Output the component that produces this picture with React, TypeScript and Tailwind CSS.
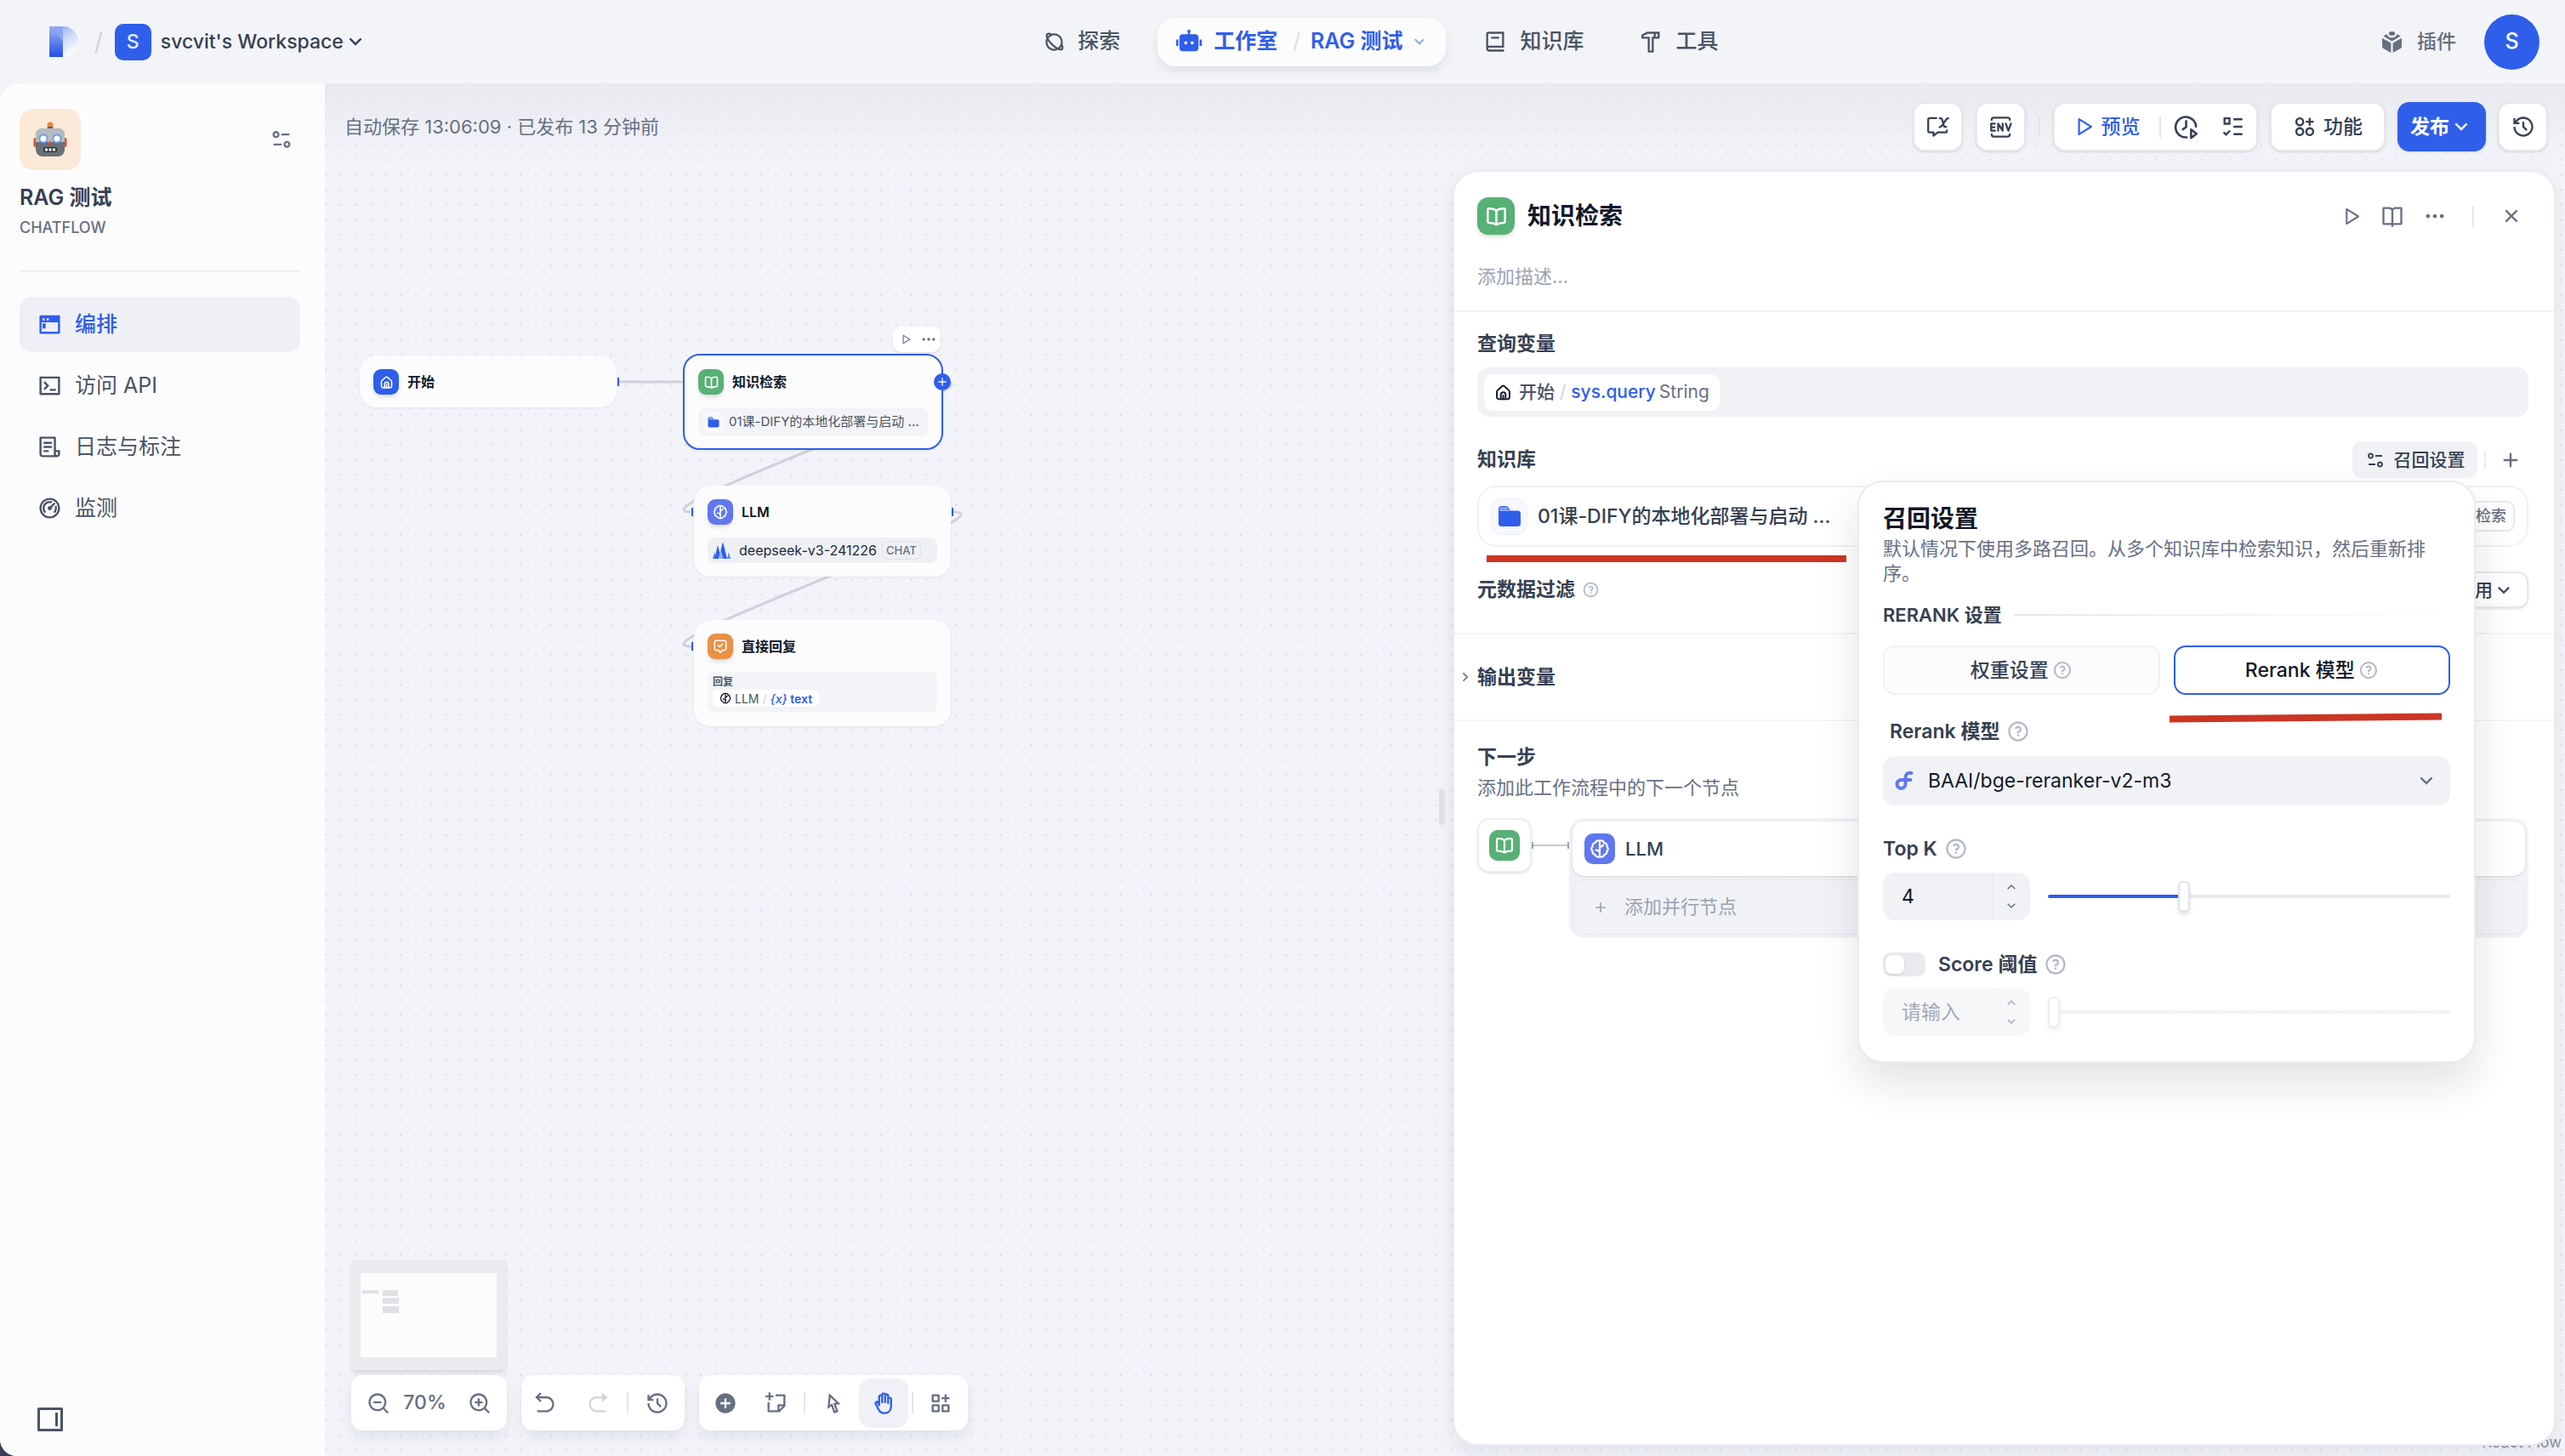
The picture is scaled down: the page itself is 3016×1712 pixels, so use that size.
import React, { useState } from 'react';
import {
  RiAddCircleFill,
  RiAddLine,
  RiApps2AddLine,
  RiArrowDownSLine,
  RiArrowGoBackLine,
  RiArrowGoForwardFill,
  RiArrowRightSLine,
  RiArrowUpSLine,
  RiBook2Line,
  RiBookOpenLine,
  RiCloseLine,
  RiCursorLine,
  RiDashboard2Line,
  RiEqualizer2Line,
  RiFileList3Line,
  RiFunctionAddLine,
  RiHammerLine,
  RiHistoryLine,
  RiMoreFill,
  RiPlanetLine,
  RiPlayLargeLine,
  RiQuestionLine,
  RiRobot2Fill,
  RiStickyNoteAddLine,
  RiTerminalBoxLine,
  RiTerminalWindowFill,
  RiZoomInLine,
  RiZoomOutLine,
} from 'react-icons/ri';

type IconProps = { className?: string };

const HomeIcon = ({ className }: IconProps) => (
  <svg viewBox="0 0 24 24" fill="none" stroke="currentColor" strokeWidth="2.2" strokeLinecap="round" strokeLinejoin="round" className={className}>
    <path d="M3.5 11.2c0-1 .4-1.8 1.2-2.4l5.6-5c1-.8 2.4-.8 3.4 0l5.6 5c.8.6 1.2 1.4 1.2 2.4v6.800a3 3 0 0 1-3 3h-11a3 3 0 0 1-3-3z" />
    <path d="M8.800 21v-6.200c0-1.800 1.400-3 3.200-3s3.200 1.200 3.200 3V21M12 16v5" />
  </svg>
);

const KnowledgeIcon = ({ className }: IconProps) => (
  <svg viewBox="0 0 24 24" fill="none" stroke="currentColor" strokeWidth="2.4" strokeLinecap="round" strokeLinejoin="round" className={className}>
    <path d="M12 5.500C10.200 4 7.500 3.200 4.200 3.200c-1.200 0-2 .8-2 2v12.200c0 1 .7 1.800 1.800 1.900 3.200.1 5.500.6 8 2 2.500-1.400 4.800-1.900 8-2 1.100-.1 1.800-.9 1.800-1.900V5.200c0-1.200-.8-2-2-2-3.300 0-6 .8-7.800 2.300zM12 5.500v15.300" />
  </svg>
);

const BrainIcon = ({ className }: IconProps) => (
  <svg viewBox="0 0 24 24" fill="none" stroke="currentColor" strokeWidth="2.2" strokeLinecap="round" strokeLinejoin="round" className={className}>
    <path d="M12 2.500v19M12 2.500c-2.500-.8-4.800.4-5.300 2.500C4.300 5.600 3.200 7.500 3.600 9.500c-1.800 1.500-1.800 4 0 5.200-.3 2 .9 3.800 3.200 4.400.6 2 2.900 3.200 5.200 2.400M12 2.500c2.500-.8 4.800.4 5.300 2.500 2.400.6 3.500 2.500 3.100 4.500 1.800 1.500 1.800 4 0 5.200.3 2-.9 3.800-3.200 4.400-.6 2-2.900 3.200-5.200 2.400" />
    <path d="M12 9.500c2.200.2 3.600-.7 4-2.300M12 16.500c-.6-2-2-3-4.500-2.800" />
  </svg>
);

const AnswerIcon = ({ className }: IconProps) => (
  <svg viewBox="0 0 24 24" fill="none" stroke="currentColor" strokeWidth="2.2" strokeLinecap="round" strokeLinejoin="round" className={className}>
    <path d="M5.500 3h13A2.500 2.500 0 0 1 21 5.500v10a2.500 2.500 0 0 1-2.500 2.500H15l-3 3.500L9 18H5.500A2.500 2.500 0 0 1 3 15.500v-10A2.500 2.500 0 0 1 5.500 3z" />
    <path d="m8.500 10.500 2.500 2.500 4.800-5" />
  </svg>
);

const FolderIcon = ({ className }: IconProps) => (
  <svg viewBox="0 0 28 26" className={className}>
    <path d="M1 4.500A3.500 3.500 0 0 1 4.500 1h5.300a3.500 3.500 0 0 1 3.100 1.900L14.500 6H1z" fill="#7f9ff3" />
    <path d="M1 6.500h22.500A3.500 3.500 0 0 1 27 10v11.500a3.500 3.500 0 0 1-3.500 3.500h-19A3.500 3.500 0 0 1 1 21.500z" fill="#2f5eeb" />
    <path d="M1.500 9V4.800A3.300 3.300 0 0 1 4.800 1.500h4.700a3 3 0 0 1 2.700 1.700l1.600 3.300" fill="none" stroke="#2f5eeb" />
  </svg>
);

const ConversationVarIcon = ({ className }: IconProps) => (
  <svg viewBox="0 0 24 24" fill="none" stroke="currentColor" strokeWidth="2" strokeLinecap="round" strokeLinejoin="round" className={className}>
    <path d="M10.500 2.500h-7A1.500 1.500 0 0 0 2 4v12a1.500 1.500 0 0 0 1.500 1.500h4V21l4.500-3.500h8a1.500 1.500 0 0 0 1.500-1.500v-.5" />
    <path d="M14 2.800h1.200c.6 0 1 .3 1.200.9l2 7c.2.600.6.900 1.200.9h1.200M23 2.800c-1 0-1.600.4-2.200 1.200L16 10.800c-.6.800-1.200 1.200-2.200 1.200" />
  </svg>
);

const EnvIcon = ({ className }: IconProps) => (
  <svg viewBox="0 0 24 24" fill="none" stroke="currentColor" strokeWidth="2" strokeLinecap="round" strokeLinejoin="round" className={className}>
    <path d="M2.500 4.500C2.500 3 3.300 2.200 4.800 2.200h14.400c1.500 0 2.300.8 2.300 2.300M2.500 19.500c0 1.500.8 2.300 2.300 2.300h14.400c1.500 0 2.300-.8 2.300-2.300" />
    <path d="M6 8.300H2v7.400h4M2 12h3.500M9.300 15.700V8.300l4.700 7.400V8.300M17.300 8.300l2.700 7.400 2.700-7.400" />
  </svg>
);

const RunHistoryIcon = ({ className }: IconProps) => (
  <svg viewBox="0 0 24 24" fill="none" stroke="currentColor" strokeWidth="2" strokeLinecap="round" strokeLinejoin="round" className={className}>
    <path d="M21 11.500A9.300 9.300 0 1 0 12.500 21.300" />
    <path d="M12 6.500V12l-3 2M16.500 14.200v7.600l5-3.800z" />
  </svg>
);

const ChecklistIcon = ({ className }: IconProps) => (
  <svg viewBox="0 0 24 24" fill="none" stroke="currentColor" strokeWidth="2" className={className}>
    <path d="M4 3.500h5v5.500H4zM13 4.500h9M13 12h9M13 19.500h9M3 17.500l2.500 2.500L9.500 16" />
  </svg>
);

const PluginIcon = ({ className }: IconProps) => (
  <svg viewBox="0 0 24 24" fill="currentColor" className={className}>
    <path d="M1.800 7.800 11 12.900V23l-8-4.400a2.300 2.300 0 0 1-1.200-2zM22.200 7.800 13 12.900V23l8-4.400a2.300 2.300 0 0 0 1.200-2z" />
    <path d="M6.800 3.600 3 5.800l9 5.200 9-5.200-3.800-2.200c-.2 2-2.200 3.800-5.200 3.800S7 5.600 6.800 3.600z" />
    <ellipse cx="12" cy="3" rx="3.200" ry="2.200" />
  </svg>
);

const HandIcon = ({ className }: IconProps) => (
  <svg viewBox="0 0 24 24" fill="none" stroke="currentColor" strokeWidth="2" strokeLinecap="round" strokeLinejoin="round" className={className}>
    <path d="M7.500 14V5.500a1.500 1.500 0 0 1 3 0V11 3.500a1.500 1.500 0 0 1 3 0V11 4.500a1.500 1.500 0 0 1 3 0V12 8a1.500 1.500 0 0 1 3 0v6.500c0 4.500-2.500 7.500-6.500 7.500-3.500 0-5-1.500-6.500-4.500l-2.600-5a1.400 1.400 0 0 1 2.400-1.400z" />
  </svg>
);

const SidebarToggleIcon = ({ className }: IconProps) => (
  <svg viewBox="0 0 30 28" fill="none" stroke="currentColor" strokeWidth="3" strokeLinejoin="round" className={className}>
    <path d="M1.500 1.500h27v25h-27zM22.500 6v16" />
  </svg>
);

const DifyLogo = () => (
  <svg viewBox="0 0 36 38" className="h-[38px] w-9">
    <defs>
      <linearGradient id="stem" x1="0" y1="0" x2="0" y2="1">
        <stop offset="0" stopColor="#9db2f2" />
        <stop offset="1" stopColor="#2450e6" />
      </linearGradient>
      <linearGradient id="bowl" x1="0" y1="0" x2="0.6" y2="1">
        <stop offset="0" stopColor="#7d97ee" />
        <stop offset="0.5" stopColor="#c9d4f7" />
        <stop offset="1" stopColor="#ffffff" />
      </linearGradient>
    </defs>
    <path d="M1 1h16a18 18 0 0 1 0 36H1z" fill="url(#bowl)" />
    <path d="M1 1h16v36H1z" fill="url(#stem)" />
    <path d="M1 1h16v17z" fill="#8da5f0" />
  </svg>
);

const RobotFace = () => (
  <svg viewBox="0 0 40 42" className="h-[42px] w-10">
    <circle cx="20" cy="4" r="3.500" fill="#e8833a" />
    <rect x="16.500" y="6" width="7" height="4" rx="1" fill="#59656c" />
    <rect x="0.500" y="19" width="4" height="11" rx="2" fill="#d9532c" />
    <rect x="35.500" y="19" width="4" height="11" rx="2" fill="#d9532c" />
    <rect x="3" y="8" width="34" height="33" rx="8" fill="#667076" />
    <path d="M11 8h18a8 8 0 0 1 8 8v8H3v-8a8 8 0 0 1 8-8z" fill="#b4bcc1" />
    <circle cx="12" cy="20" r="5.500" fill="#6f9be8" />
    <circle cx="28" cy="20" r="5.500" fill="#6f9be8" />
    <circle cx="12" cy="20" r="3.600" fill="#fff" />
    <circle cx="28" cy="20" r="3.600" fill="#fff" />
    <path d="m20 22 3 5h-6z" fill="#e0502c" />
    <rect x="12" y="30" width="16" height="6" rx="2" fill="#2f363a" />
    <path d="M14 31.500h3v3h-3zM18.500 31.500h3v3h-3zM23 31.500h3v3h-3z" fill="#fff" />
  </svg>
);

const VolcIcon = () => (
  <svg viewBox="0 0 21 20" className="h-5 w-[21px]">
    <path d="M0 20 2 12l2 8zM17 20l2-8 2 8z" fill="#5f86f0" />
    <path d="m2 20 4-16 4 16z" fill="#2f5eeb" />
    <path d="m12 0 5 20H7z" fill="#2f5eeb" />
    <path d="m9.500 9 3 11h-6z" fill="#8fb0f7" />
  </svg>
);

const RerankLogo = () => (
  <svg viewBox="0 0 24 24" className="h-6 w-6">
    <path d="M21.500 3C15 2 14.500 6 14.500 10v5.500a5 5 0 1 1-5-4.500h11" fill="none" stroke="#6478ee" strokeWidth="4" strokeLinecap="round" />
  </svg>
);

const Help = ({ className = 'h-[21px] w-[21px]' }: IconProps) => <RiQuestionLine className={`shrink-0 text-[#b4bac6] ${className}`} />;

const Divider = () => <div className="h-[25px] w-0.5 shrink-0 bg-[#e4e6eb]" />;

const sideItems = [
  { label: '编排', icon: RiTerminalWindowFill, active: true },
  { label: '访问 API', icon: RiTerminalBoxLine },
  { label: '日志与标注', icon: RiFileList3Line },
  { label: '监测', icon: RiDashboard2Line },
];

const Header = () => (
  <header className="flex h-[98px] shrink-0 items-center justify-between pl-[57px] pr-[30px]">
    <div className="flex items-center">
      <DifyLogo />
      <span className="ml-[18px] mr-3.5 text-[28px] font-light text-[#c9cdd5]">/</span>
      <span className="flex h-[43px] w-[43px] items-center justify-center rounded-[10px] bg-[#2f5eeb] text-[23px] font-medium text-[#e6ecfd]">S</span>
      <button className="ml-[11px] flex items-center text-[23px] font-medium text-[#354052]">
        svcvit's Workspace
        <RiArrowDownSLine className="h-7 w-7" />
      </button>
    </div>
    <nav className="ml-4 flex items-center text-[25px] font-medium text-[#495464]">
      <a href="#" className="flex items-center gap-3.5 px-5">
        <RiPlanetLine className="h-[27px] w-[27px]" />
        探索
      </a>
      <div className="ml-6 flex h-[57px] items-center rounded-[21px] bg-[#fcfcfd] pl-[22px] pr-5 font-semibold text-[#2f5eeb] shadow-[0_6px_12px_rgba(16,24,40,0.08)]">
        <a href="#" className="flex items-center gap-3.5">
          <RiRobot2Fill className="h-[30px] w-[30px]" />
          工作室
        </a>
        <span className="ml-[18px] mr-3 font-light text-[#d5d9e0]">/</span>
        <button className="flex items-center gap-2">
          RAG 测试
          <RiArrowDownSLine className="h-[22px] w-[22px] text-[#86a3f3]" />
        </button>
      </div>
      <a href="#" className="ml-6 flex items-center gap-4 px-5">
        <RiBook2Line className="h-7 w-7" />
        知识库
      </a>
      <a href="#" className="ml-6 flex items-center gap-4 px-5">
        <RiHammerLine className="h-7 w-7" />
        工具
      </a>
    </nav>
    <div className="flex items-center">
      <a href="#" className="flex items-center gap-4 text-[23px] font-medium text-[#676f83]">
        <PluginIcon className="h-[27px] w-[27px]" />
        插件
      </a>
      <button className="ml-[33px] h-[65px] w-[65px] rounded-full bg-[#2f5eeb] text-[25px] font-medium text-white">S</button>
    </div>
  </header>
);

const Sidebar = () => (
  <aside className="flex w-[382px] shrink-0 flex-col rounded-tl-[24px] bg-[#fcfcfd] pl-[23px] pr-[29px] pt-[30px]">
    <div className="flex items-center justify-between pr-2">
      <div className="flex h-[72px] w-[72px] items-center justify-center rounded-[16px] bg-[#fce9d7]">
        <RobotFace />
      </div>
      <RiEqualizer2Line className="h-7 w-7 text-[#676f83]" />
    </div>
    <h1 className="mt-4 text-[25px]/8 font-semibold text-[#354052]">RAG 测试</h1>
    <p className="mt-2 text-[18px]/6 font-medium text-[#676f83]">CHATFLOW</p>
    <div className="mt-[38px] h-0.5 bg-[#f0f1f4]" />
    <nav className="mt-[29px] flex flex-col gap-[7px]">
      {sideItems.map(({ label, icon: Icon, active }) => (
        <a key={label} href="#" className={`flex h-[65px] items-center gap-[15px] rounded-[14px] px-[21px] text-[25px] ${active ? 'bg-[#eef0f5] font-medium text-[#2f5eeb]' : 'text-[#495464]'}`}>
          <Icon className="h-[29px] w-[29px]" />
          {label}
        </a>
      ))}
    </nav>
    <button aria-label="收起" className="mb-[29px] ml-[21px] mt-auto w-[30px] text-[#495464]">
      <SidebarToggleIcon className="h-7 w-[30px]" />
    </button>
  </aside>
);

const toolBtn = 'flex h-[58px] items-center justify-center rounded-[14px] border-2 border-[#e6e8ec] bg-white text-[#354052] shadow-sm';

const Toolbar = () => (
  <div className="relative flex h-[102px] shrink-0 items-center justify-between pl-[23px] pr-5">
    <p className="text-[22px] text-[#676f83]">自动保存 13:06:09 · 已发布 13 分钟前</p>
    <div className="flex items-center">
      <button aria-label="会话变量" className={`${toolBtn} w-[59px]`}><ConversationVarIcon className="h-[27px] w-[27px]" /></button>
      <button aria-label="环境变量" className={`${toolBtn} ml-[15px] w-[59px]`}><EnvIcon className="h-[27px] w-[27px]" /></button>
      <div className="mx-[15px]"><Divider /></div>
      <div className={`${toolBtn} w-[241px] pl-1.5 text-[23px]`}>
        <button className="flex items-center gap-2 font-medium text-[#2f5eeb]">
          <RiPlayLargeLine className="h-[26px] w-[26px]" />
          预览
        </button>
        <div className="ml-[22px] mr-3.5"><Divider /></div>
        <button aria-label="运行历史"><RunHistoryIcon className="h-[31px] w-[31px]" /></button>
        <button aria-label="检查清单" className="ml-[25px]"><ChecklistIcon className="h-7 w-7" /></button>
      </div>
      <button className={`${toolBtn} ml-[14px] w-[136px] gap-2 text-[23px] font-medium`}>
        <RiApps2AddLine className="h-7 w-7" />
        功能
      </button>
      <button className="ml-[14px] flex h-[58px] w-[104px] items-center justify-center rounded-[14px] bg-[#2f5eeb] text-[23px] font-semibold text-white shadow-sm">
        发布
        <RiArrowDownSLine className="h-7 w-7" />
      </button>
      <button aria-label="版本历史" className={`${toolBtn} ml-[14px] w-[59px]`}><RiHistoryLine className="h-7 w-7" /></button>
    </div>
  </div>
);

type NodeProps = { className: string; title: string; tile: string; icon: React.ReactNode; children?: React.ReactNode };

const FlowNode = ({ className, title, tile, icon, children }: NodeProps) => (
  <div className={`absolute rounded-[20px] bg-[#fcfcfd] px-4 py-4 shadow-[0_1px_3px_rgba(16,24,40,0.08)] ${className}`}>
    <div className="flex h-[30px] items-center gap-2.5 text-[16px] font-semibold text-[#101828]">
      <span className={`flex h-[30px] w-[30px] items-center justify-center rounded-[9px] text-white shadow-md ${tile}`}>{icon}</span>
      {title}
    </div>
    {children}
  </div>
);

const Handle = ({ className }: IconProps) => <span className={`absolute h-2.5 w-0.5 bg-[#2f5eeb] ${className}`} />;

const Canvas = () => (
  <div className="absolute inset-0 overflow-hidden">
    <svg className="absolute inset-0 h-full w-full">
      <defs>
        <pattern id="dots" width="17.64" height="17.64" patternUnits="userSpaceOnUse">
          <circle cx="1.300" cy="1.900" r="1.300" fill="#dfe1e8" />
        </pattern>
      </defs>
      <rect width="100%" height="100%" fill="url(#dots)" />
      <g fill="none" stroke="#d0d2d9" strokeWidth="3">
        <path d="M346 351H422" />
        <path d="M728 351C805 351 354 504 431 504" />
        <path d="M739 504C817 504 353 662 431 662" />
      </g>
    </svg>
    <div className="absolute inset-x-0 top-0 h-24 bg-linear-to-b from-[#e9eaef] to-transparent" />
    <FlowNode className="left-[41px] top-[320px] h-[61px] w-[302px]" title="开始" tile="bg-[#2f5eeb]" icon={<HomeIcon className="h-[17px] w-[17px]" />} />
    <Handle className="left-[344px] top-[346px]" />
    <FlowNode className="left-[421px] top-[318px] h-[113px] w-[306px] border-2 border-[#2f5eeb]" title="知识检索" tile="bg-[#57b075]" icon={<KnowledgeIcon className="h-[17px] w-[17px]" />}>
      <div className="mt-4 flex h-[33px] items-center rounded-lg bg-[#f2f4f7] px-1.5 text-[15px] text-[#495464]">
        <span className="mr-1.5 flex h-6 w-6 items-center justify-center rounded-md bg-[#f8f9fd]"><FolderIcon className="h-[13px] w-[14px]" /></span>
        <span className="whitespace-nowrap">01课-DIFY的本地化部署与启动 ...</span>
      </div>
    </FlowNode>
    <button aria-label="添加节点" className="absolute left-[716px] top-[341px] flex h-5 w-5 items-center justify-center rounded-full bg-[#2f5eeb] text-white">
      <RiAddLine className="h-4 w-4" />
    </button>
    <div className="absolute left-[668px] top-[286px] flex h-[30px] w-14 items-center justify-between rounded-[9px] bg-white pl-2 pr-1 text-[#676f83] shadow-sm">
      <RiPlayLargeLine className="h-3.5 w-3.5" />
      <RiMoreFill className="h-5 w-5" />
    </div>
    <FlowNode className="left-[434px] top-[473px] h-[107px] w-[302px]" title="LLM" tile="bg-[#6177ee]" icon={<BrainIcon className="h-[18px] w-[18px]" />}>
      <div className="mt-[15px] flex h-[30px] items-center rounded-lg bg-[#eef0f4] px-1.5 text-[16px] text-[#1d2939]">
        <VolcIcon />
        <span className="ml-2.5">deepseek-v3-241226</span>
        <span className="ml-1.5 rounded-md border border-[#e0e2e7] px-1 text-[13px]/5 font-medium text-[#676f83]">CHAT</span>
      </div>
    </FlowNode>
    <Handle className="left-[431px] top-[499px]" />
    <Handle className="left-[737px] top-[499px]" />
    <FlowNode className="left-[434px] top-[631px] h-[125px] w-[302px]" title="直接回复" tile="bg-[#e99145]" icon={<AnswerIcon className="h-[18px] w-[18px]" />}>
      <div className="mt-[15px] h-12 rounded-lg bg-[#f2f4f7] px-1.5 py-1">
        <p className="text-[12px]/4 font-semibold text-[#495464]">回复</p>
        <p className="mt-px flex h-5 w-[125px] items-center gap-1 whitespace-nowrap rounded-md bg-white px-2 text-[14px] text-[#495464]">
          <BrainIcon className="h-3.5 w-3.5 shrink-0 text-[#101828]" />
          LLM <span className="text-[#d0d5dd]">/</span>
          <span className="font-semibold text-[#2f5eeb]"><i className="font-medium">{'{x}'}</i> text</span>
        </p>
      </div>
    </FlowNode>
    <Handle className="left-[431px] top-[657px]" />
    <a href="#" className="absolute bottom-1 right-1 text-[18px]/6 text-[#8b8f99]">React Flow</a>
  </div>
);

const bar = 'flex items-center rounded-[14px] bg-white text-[#676f83] shadow-[0_8px_16px_rgba(16,24,40,0.08)]';

const BottomControls = () => (
  <div className="relative flex min-w-0 flex-1 flex-col justify-end pb-[15px] pl-[31px]">
    <svg viewBox="0 0 182 129" className="mb-1.5 h-[129px] w-[182px] shadow-md">
      <rect width="182" height="129" fill="#eaebef" />
      <rect x="11" y="15" width="160" height="99" fill="#fcfcfd" />
      <path d="M13 35h19v4H13zM37 35h18v7H37zM37 44h19v7H37zM37 54h19v8H37z" fill="#e0e1e5" />
    </svg>
    <div className="mb-[15px] flex gap-[17px]">
      <div className={`${bar} h-[65px] w-[183px] justify-between px-[18px] text-[23px] font-medium`}>
        <button aria-label="缩小"><RiZoomOutLine className="h-7 w-7" /></button>
        <span className="mr-2.5">70%</span>
        <button aria-label="放大"><RiZoomInLine className="h-7 w-7" /></button>
      </div>
      <div className={`${bar} h-[65px] w-[192px] px-3.5`}>
        <button aria-label="撤销"><RiArrowGoBackLine className="h-7 w-7" /></button>
        <button aria-label="重做" className="ml-[34px] text-[#d3d6dc]"><RiArrowGoForwardFill className="h-7 w-7" /></button>
        <div className="mx-5"><Divider /></div>
        <button aria-label="历史"><RiHistoryLine className="h-7 w-7" /></button>
      </div>
      <div className={`${bar} h-[65px] w-[316px] pl-[17px]`}>
        <button aria-label="添加"><RiAddCircleFill className="h-7 w-7" /></button>
        <button aria-label="添加注释" className="ml-8"><RiStickyNoteAddLine className="h-7 w-7" /></button>
        <div className="ml-[18px] mr-[18px]"><Divider /></div>
        <button aria-label="指针"><RiCursorLine className="h-7 w-7" /></button>
        <button aria-label="手型" className="ml-[17px] flex h-[58px] w-[58px] items-center justify-center rounded-[14px] bg-[#eff1f6] text-[#2f5eeb]"><HandIcon className="h-7 w-7" /></button>
        <div className="ml-1 mr-[18px]"><Divider /></div>
        <button aria-label="整理"><RiFunctionAddLine className="h-7 w-7" /></button>
      </div>
    </div>
  </div>
);

type NumberRowProps = { label: string; value: string; min: number; max: number; disabled?: boolean };

const NumberRow = ({ label, value, min, max, disabled }: NumberRowProps) => {
  const [current, setCurrent] = useState(value);
  const percent = ((Number(current || min) - min) / (max - min)) * 100;

  return (
    <div className={`mt-3.5 flex h-14 items-center gap-[21px] ${disabled ? 'opacity-60' : ''}`}>
      <div className="flex h-full w-[173px] overflow-hidden rounded-[14px] bg-[#f1f2f6]">
        <input aria-label={label} value={current} onChange={e => setCurrent(e.target.value)} placeholder="请输入" disabled={disabled} className="w-[128px] bg-transparent pl-[22px] text-[23px] text-[#101828] placeholder:text-[#676f83]" />
        <div className="flex flex-1 flex-col items-center justify-center gap-1 border-l border-[#e6e8ec] text-[#676f83]">
          <button aria-label="增加" disabled={disabled}><RiArrowUpSLine className="h-[18px] w-[18px]" /></button>
          <button aria-label="减少" disabled={disabled}><RiArrowDownSLine className="h-[18px] w-[18px]" /></button>
        </div>
      </div>
      <input
        type="range"
        aria-label={label}
        min={min}
        max={max}
        value={current || min}
        disabled={disabled}
        onChange={e => setCurrent(e.target.value)}
        style={{ backgroundImage: `linear-gradient(to right, #2f5eeb ${percent}%, #e9eaee ${percent}%)` }}
        className="h-1 min-w-0 flex-1 appearance-none rounded-full [&::-webkit-slider-thumb]:h-9 [&::-webkit-slider-thumb]:w-3.5 [&::-webkit-slider-thumb]:appearance-none [&::-webkit-slider-thumb]:rounded-[5px] [&::-webkit-slider-thumb]:border-2 [&::-webkit-slider-thumb]:border-[#e0e2e8] [&::-webkit-slider-thumb]:bg-white [&::-webkit-slider-thumb]:shadow-md"
      />
    </div>
  );
};

const RecallPopup = () => (
  <div className="absolute right-0.5 top-[46px] z-20 w-[727px] rounded-[30px] border-2 border-[#eaebef] bg-white px-7 pb-[30px] pt-[25px] text-[23px] text-[#354052] shadow-[0_24px_48px_rgba(16,24,40,0.12)]">
    <h3 className="text-[28px]/9 font-semibold text-[#101828]">召回设置</h3>
    <p className="mt-[3px] text-[22px]/[29px] text-[#676f83]">默认情况下使用多路召回。从多个知识库中检索知识，然后重新排序。</p>
    <div className="mt-5 flex h-7 items-center gap-3.5 text-[22px] font-semibold">
      RERANK 设置
      <div className="h-0.5 flex-1 bg-linear-to-r from-[#e6e7ec] to-transparent" />
    </div>
    <div className="relative mt-[22px] grid grid-cols-2 gap-4">
      <button className="flex h-[58px] items-center justify-center gap-1 rounded-[14px] border-2 border-[#f0f1f4] bg-[#fcfcfd] font-medium">
        权重设置 <Help className="h-6 w-6" />
      </button>
      <button className="flex h-[58px] items-center justify-center gap-1 rounded-[14px] border-2 border-[#2f5eeb] font-medium text-[#101828]">
        Rerank 模型 <Help className="h-6 w-6" />
      </button>
      <svg viewBox="0 0 320 12" className="absolute right-[10px] top-[79px] h-3 w-80">
        <path d="M0 7.500 320 4.500" stroke="#cb3624" strokeWidth="8" />
      </svg>
    </div>
    <label htmlFor="rerank" className="mt-[29px] flex h-7 items-center gap-2 pl-2 font-semibold">
      Rerank 模型 <Help className="h-7 w-7" />
    </label>
    <div className="relative mt-[15px]">
      <select id="rerank" className="h-[58px] w-full appearance-none rounded-[14px] bg-[#f1f2f6] pl-[53px] text-[23px] text-[#101828]">
        <option>BAAI/bge-reranker-v2-m3</option>
      </select>
      <span className="absolute left-3 top-[17px]"><RerankLogo /></span>
      <RiArrowDownSLine className="absolute right-3.5 top-[15px] h-7 w-7 text-[#676f83]" />
    </div>
    <div className="mt-[37px] flex h-7 items-center gap-2 font-semibold">
      Top K <Help className="h-7 w-7" />
    </div>
    <NumberRow label="Top K" value="4" min={1} max={10} />
    <div className="mt-[38px] flex h-7 items-center font-semibold">
      <input id="score" type="checkbox" role="switch" className="mr-[15px] h-7 w-[50px] appearance-none rounded-[9px] bg-[#e9eaee] p-[3px] before:block before:h-[22px] before:w-[22px] before:rounded-[7px] before:bg-white before:shadow-sm" />
      <label htmlFor="score">Score 阈值</label>
      <Help className="ml-2 h-7 w-7" />
    </div>
    <NumberRow label="Score 阈值" value="" min={0} max={1} disabled />
  </div>
);

const Panel = () => (
  <section className="relative mb-3 mr-[11px] flex w-[1297px] shrink-0 flex-col rounded-[30px] border-2 border-[#eaebef] bg-white text-[23px] text-[#354052] shadow-[0_8px_24px_rgba(16,24,40,0.08)]">
    <div className="absolute -left-[18px] top-[725px] h-[43px] w-[7px] rounded-full bg-[#dfe1e6]" />
    <div className="border-b-2 border-[#f2f4f7] pb-6 pl-[27px] pr-[30px] pt-[30px]">
      <div className="flex h-11 items-center">
        <span className="flex h-11 w-11 items-center justify-center rounded-[13px] bg-[#57b075] text-white shadow-md"><KnowledgeIcon className="h-[25px] w-[25px]" /></span>
        <h2 className="ml-[15px] flex-1 text-[28px] font-semibold text-[#101828]">知识检索</h2>
        <div className="flex items-center pr-1.5 text-[#676f83]">
          <button aria-label="运行"><RiPlayLargeLine className="h-[25px] w-[25px]" /></button>
          <button aria-label="文档" className="ml-[22px]"><RiBookOpenLine className="h-7 w-7" /></button>
          <button aria-label="更多" className="ml-[22px]"><RiMoreFill className="h-7 w-7" /></button>
          <div className="mx-[30px]"><Divider /></div>
          <button aria-label="关闭"><RiCloseLine className="h-7 w-7" /></button>
        </div>
      </div>
      <p className="mt-[33px] text-[22px]/8 text-[#98a2b2]">添加描述...</p>
    </div>
    <div className="border-b-2 border-[#f2f4f7] pb-[29px] pl-[27px] pr-[30px] pt-[21px]">
      <h3 className="text-[23px]/8 font-semibold">查询变量</h3>
      <div className="mt-3 flex h-[58px] items-center rounded-[14px] bg-[#f1f2f6] px-2">
        <div className="flex h-[43px] items-center rounded-[10px] bg-white px-3 text-[21px] font-medium text-[#495464]">
          <HomeIcon className="mr-2 h-[21px] w-[21px] text-[#101828]" />
          开始
          <span className="mx-1.5 font-light text-[#c5cad3]">/</span>
          <span className="text-[#2f5eeb]">sys.query</span>
          <span className="ml-1 font-normal text-[#676f83]">String</span>
        </div>
      </div>
      <div className="relative mt-[29px] flex h-[43px] items-center">
        <h3 className="flex-1 font-semibold">知识库</h3>
        <div className="relative">
          <button className="flex h-[43px] w-[147px] items-center justify-center gap-2.5 rounded-[10px] bg-[#f1f2f5] text-[21px] font-medium">
            <RiEqualizer2Line className="h-6 w-6" />
            召回设置
          </button>
          <RecallPopup />
        </div>
        <div className="mx-2 h-[21px] w-0.5 bg-[#eaecf0]" />
        <button aria-label="添加知识库" className="mx-[7px] text-[#676f83]"><RiAddLine className="h-7 w-7" /></button>
      </div>
      <div className="relative mt-[9px] flex h-[72px] items-center justify-between rounded-[22px] border-2 border-[#f0f1f4] px-3.5">
        <div className="flex items-center gap-3 font-medium">
          <span className="flex h-[43px] w-[43px] items-center justify-center rounded-[12px] border border-[#eceffa] bg-[#f7f8fd]"><FolderIcon className="h-[26px] w-7" /></span>
          01课-DIFY的本地化部署与启动 ...
        </div>
        <span className="rounded-[9px] border-2 border-[#e6e8ec] px-2 text-[18px]/8 font-medium text-[#676f83]">高质量 · 向量检索</span>
        <div className="absolute left-[9px] top-20 h-2 w-[423px] bg-[#cb3624]" />
      </div>
      <div className="mt-[29px] flex h-[43px] items-center gap-2 font-semibold">
        元数据过滤 <Help />
        <button className="ml-auto flex h-[43px] items-center rounded-[12px] border-2 border-[#e6e8ec] pl-4 pr-3.5 text-[21px] font-medium shadow-sm">
          禁用 <RiArrowDownSLine className="h-[26px] w-[26px]" />
        </button>
      </div>
    </div>
    <div className="flex h-[102px] items-center border-b-2 border-[#f2f4f7] pl-[3px] font-semibold">
      <RiArrowRightSLine className="mr-1 h-5 w-5 text-[#676f83]" />
      输出变量
    </div>
    <div className="pl-[27px] pr-[30px] pt-[26px]">
      <h3 className="text-[23px]/8 font-semibold">下一步</h3>
      <p className="mt-1 text-[22px]/8 text-[#676f83]">添加此工作流程中的下一个节点</p>
      <div className="mt-5 flex">
        <div className="flex h-16 w-16 items-center justify-center rounded-[14px] border-2 border-[#eceef2] shadow-sm">
          <span className="flex h-9 w-9 items-center justify-center rounded-[10px] bg-[#57b075] text-white shadow-sm"><KnowledgeIcon className="h-[22px] w-[22px]" /></span>
        </div>
        <div className="mt-7 flex h-2 w-11 items-center border-x-2 border-[#98a2b2]">
          <div className="h-0.5 flex-1 bg-[#c5c9d2]" />
        </div>
        <div className="flex-1 rounded-[18px] bg-[#f1f2f6] p-1">
          <div className="flex h-16 items-center gap-3 rounded-[14px] bg-white px-3.5 text-[22px] font-medium shadow-sm">
            <span className="flex h-9 w-9 items-center justify-center rounded-[10px] bg-[#6177ee] text-white"><BrainIcon className="h-6 w-6" /></span>
            LLM
          </div>
          <button className="mt-1 flex h-[65px] w-full items-center gap-[18px] rounded-[14px] border border-dashed border-[#dcdfe5] px-[22px] text-[22px] text-[#98a2b2]">
            <RiAddLine className="h-5 w-5" />
            添加并行节点
          </button>
        </div>
      </div>
    </div>
  </section>
);

const App = () => (
  <div className="bg-[#3a3f55]">
    <div className="flex h-screen flex-col overflow-hidden rounded-bl-[20px] bg-[#f2f4f7] font-['Inter','Noto_Sans_CJK_SC',sans-serif] antialiased">
      <Header />
      <div className="flex min-h-0 flex-1">
        <Sidebar />
        <main className="relative flex min-w-0 flex-1 flex-col bg-[#f2f4f9]">
          <Canvas />
          <Toolbar />
          <div className="flex min-h-0 flex-1">
            <BottomControls />
            <Panel />
          </div>
        </main>
      </div>
    </div>
  </div>
);

export default App;
